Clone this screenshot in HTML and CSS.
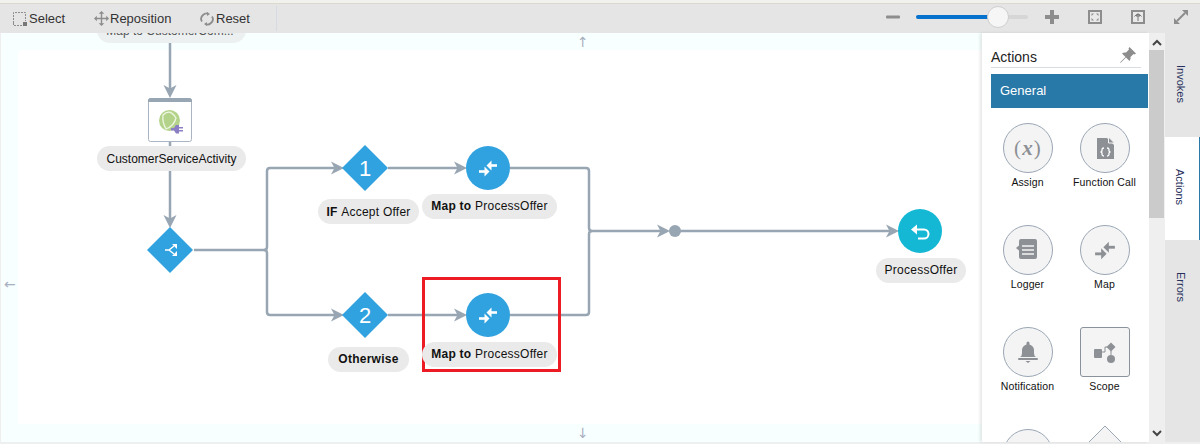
FILE: index.html
```html
<!DOCTYPE html>
<html lang="en">
<head>
    <meta charset="UTF-8">
    <meta name="viewport" content="width=device-width, initial-scale=1.0">
    <title>Process Editor</title>
    <link rel="stylesheet" href="styles.css">
</head>
<body>
    <svg class="defs" width="0" height="0">
        <symbol id="map-icon" viewBox="0 0 20 20">
            <path d="M1 13.500h8" fill="none" stroke="currentColor" stroke-width="2.600"/>
            <path d="M6.500 8.500l5 5-5 5zM13.500 2.500l-5 5 5 5z" fill="currentColor"/>
            <path d="M19 7.500h-8" fill="none" stroke="currentColor" stroke-width="2.600"/>
        </symbol>
    </svg>

    <div class="toolbar">
        <div class="tool">
            <svg width="14" height="14" viewBox="0 0 14 14"><path d="M.5 11V.5h12V9" fill="none" stroke="#8d8d8d" stroke-dasharray="2 1"/><path d="M.5 11v2.500H9" fill="none" stroke="#8d8d8d" stroke-dasharray="2 1"/><rect x="10" y="10" width="4" height="4" fill="#777"/></svg>
            <span>Select</span>
        </div>
        <div class="tool tool-reposition">
            <svg width="15" height="15" viewBox="0 0 16 16"><path d="M8 1v14M1 8h14" stroke="#8d8d8d" stroke-width="1.500"/><path d="M8 0l3 3H5zM8 16l-3-3h6zM0 8l3-3v6zM16 8l-3 3V5z" fill="#8d8d8d"/></svg>
            <span>Reposition</span>
        </div>
        <div class="tool tool-reset">
            <svg width="14" height="14" viewBox="0 0 14 14"><path d="M2 9.500A5 5 0 0 1 3 3q2-2 5-1.500M12 4.500A5 5 0 0 1 11 11q-2 2-5 1.500" fill="none" stroke="#8d8d8d" stroke-width="1.800"/><path d="M7 0v4l3-2zM7 14v-4l-3 2z" fill="#8d8d8d"/></svg>
            <span>Reset</span>
        </div>
        <div class="separator"></div>

        <div class="zoom-tools">
            <svg class="zoom-minus" width="14" height="4" viewBox="0 0 14 4"><rect width="14" height="3" rx="1" y=".5" fill="#8d8d8d"/></svg>
            <div class="slider">
                <div class="slider-fill"></div>
                <div class="slider-thumb"></div>
            </div>
            <svg class="zoom-plus" width="14" height="14" viewBox="0 0 14 14"><path d="M7 0v14M0 7h14" stroke="#8d8d8d" stroke-width="4"/></svg>
            <svg class="zoom-fit" width="14" height="14" viewBox="0 0 14 14"><rect x="1" y="1" width="12" height="12" fill="#e9e9e9" stroke="#8d8d8d" stroke-width="2"/><path d="M3.500 3.500h2.500L3.500 6zM10.500 3.500V6L8 3.500zM3.500 10.500V8L6 10.500zM10.500 10.500H8L10.500 8z" fill="#8d8d8d"/></svg>
            <svg class="zoom-next" width="14" height="14" viewBox="0 0 14 14"><rect x="1" y="1" width="12" height="12" fill="#e9e9e9" stroke="#8d8d8d" stroke-width="2"/><path d="M7 11V5M3.500 6.500A4 4 0 0 1 10.500 6.500M7 3.500 5 6h4z" fill="none" stroke="#777" stroke-width="1"/></svg>
            <svg class="zoom-expand" width="14" height="14" viewBox="0 0 14 14"><path d="M3 11l8-8" stroke="#8d8d8d" stroke-width="2"/><path d="M8 0h6v6zM0 8v6h6z" fill="#8d8d8d"/></svg>
        </div>
    </div>

    <div class="workspace">
        <div class="canvas">
            <div class="canvas-inner"></div>
            <span class="pan pan-up">↑</span>
            <span class="pan pan-left">←</span>
            <span class="pan pan-down">↓</span>

            <svg class="flow" width="982" height="409" viewBox="0 33 982 409">
                <defs>
                    <path id="head" d="M-13-6.500 0 0l-13 6.500 3.500-6.500z" fill="#98a5b3"/>
                </defs>
                <g fill="none" stroke="#98a5b3" stroke-width="2.500">
                    <path d="M170 33v60M170 142v4M170 171v52"/>
                    <path d="M194 250h70q3 0 3-3v-76q0-3 3-3h68"/>
                    <path d="M264 250q3 0 3 3v59q0 3 3 3h68"/>
                    <path d="M388 168h75M388 315h75"/>
                    <path d="M510 168h76q3 0 3 3v57q0 3 3 3h70"/>
                    <path d="M510 315h76q3 0 3-3v-78q0-3 3-3"/>
                    <path d="M675 231h220"/>
                </g>
                <use href="#head" transform="translate(170 98) rotate(90)"/>
                <use href="#head" transform="translate(170 228) rotate(90)"/>
                <use href="#head" transform="translate(344 168)"/>
                <use href="#head" transform="translate(344 315)"/>
                <use href="#head" transform="translate(467 168)"/>
                <use href="#head" transform="translate(467 315)"/>
                <use href="#head" transform="translate(670 231)"/>
                <use href="#head" transform="translate(899 231)"/>

                <rect x="148.500" y="98.500" width="43" height="43" rx="2" fill="#fff" stroke="#a9b5c2"/>
                <path d="M148 101q0-3 3-3h38q3 0 3 3v1h-44z" fill="#98a5b3"/>
                <circle cx="169.500" cy="120.500" r="10.500" fill="#b3d38a"/>
                <path d="M163 115Q170 108 176 118 174 126 166 129 162 122 163 115z" fill="none" stroke="#eef5e2" stroke-width="1.300"/>
                <path d="M171 128h3l2-3h3v2h4v1.500h-4v1.500h4v1.500h-4v2h-3l-2-3h-3z" fill="#8c7ec4"/>

                <path d="M170 227l23 23-23 23-23-23z" fill="#30a2df"/>
                <path d="M165 250h4l5-4M169 250l5 4" fill="none" stroke="#fff" stroke-width="1.500"/>
                <path d="M177 244v5l-5-5zM177 256v-5l-5 5z" fill="#fff"/>
                <path d="M365 145l23 23-23 23-23-23z" fill="#30a2df"/>
                <text class="flow-number" x="365" y="176">1</text>
                <path d="M365 292l23 23-23 23-23-23z" fill="#30a2df"/>
                <text class="flow-number" x="365" y="323">2</text>
                <circle cx="488" cy="168" r="22" fill="#30a2df"/>
                <circle cx="488" cy="315" r="22" fill="#30a2df"/>
                <use class="white-icon" href="#map-icon" x="478" y="158" width="20" height="20"/>
                <use class="white-icon" href="#map-icon" x="478" y="305" width="20" height="20"/>
                <circle cx="675" cy="231" r="6" fill="#98a5b3"/>
                <circle cx="920" cy="231" r="22" fill="#14b8d4"/>
                <path d="M915 229.500h9a4.500 4.500 0 0 1 0 9h-6" fill="none" stroke="#fff" stroke-width="2"/>
                <path d="M911 229.500l6-5v10z" fill="#fff"/>
                <rect x="423.500" y="278.500" width="136" height="92" fill="none" stroke="#ed1c24" stroke-width="3"/>
            </svg>

            <div class="pill pill-top">Map to CustomerCom...</div>
            <div class="pill pill-activity">CustomerServiceActivity</div>
            <div class="pill pill-if"><b>IF</b>&nbsp;Accept Offer</div>
            <div class="pill pill-map-one"><b>Map to</b>&nbsp;ProcessOffer</div>
            <div class="pill pill-otherwise"><b>Otherwise</b></div>
            <div class="pill pill-map-two"><b>Map to</b>&nbsp;ProcessOffer</div>
            <div class="pill pill-return">ProcessOffer</div>
        </div>

        <div class="panel">
            <div class="panel-header">
                <span>Actions</span>
                <svg width="16" height="16" viewBox="0 0 16 16"><path d="M9.500 0 16 6.500l-1.500 1-1-.5-3 3q.5 2.500-1 4L6 10.500 1 15.500l-1 .5.500-1L5.500 10 2 6.500q1.500-1.500 4-1l3-3-.5-1z" fill="#8d8d8d"/></svg>
            </div>
            <div class="panel-section">General</div>
            <div class="cards">
                <div class="card">
                    <div class="card-icon card-text">(<i>x</i>)</div>
                    <span>Assign</span>
                </div>
                <div class="card">
                    <div class="card-icon">
                        <svg width="24" height="24" viewBox="0 0 24 24"><path d="M4 2h10l7 7v14H4z" fill="#8d9095"/><path d="M15.500 1l6 6h-6z" fill="#8d9095" stroke="#f4f4f4"/><path d="M11 12q-2 0-2 1.500v1.500l-1 1 1 1v1.500q0 1.500 2 1.500M14 12q2 0 2 1.500v1.500l1 1-1 1v1.500q0 1.500-2 1.500" fill="none" stroke="#fff" stroke-width="1.300"/></svg>
                    </div>
                    <span>Function Call</span>
                </div>
                <div class="card">
                    <div class="card-icon">
                        <svg width="24" height="24" viewBox="0 0 24 24"><rect x="3" y="1" width="18" height="20" rx="2" fill="#8d9095"/><path d="M6 8h12M6 12h12M6 16h12" stroke="#f4f4f4" stroke-width="1.500"/><path d="M0 10l3-2.500v5z" fill="#8d9095"/></svg>
                    </div>
                    <span>Logger</span>
                </div>
                <div class="card">
                    <div class="card-icon grey-icon">
                        <svg width="22" height="22"><use href="#map-icon"/></svg>
                    </div>
                    <span>Map</span>
                </div>
                <div class="card">
                    <div class="card-icon">
                        <svg width="22" height="22" viewBox="0 0 22 22"><path d="M3 16q2-1 2-4V9q0-4 4.500-5.500V2a1.500 1.500 0 0 1 3 0v1.500Q17 5 17 9v3q0 3 2 4z" fill="#8d9095"/><rect y="17" width="20" height="2" rx="1" x="1" fill="#8d9095"/><path d="M8.500 20h5l-2.500 2z" fill="#8d9095"/></svg>
                    </div>
                    <span>Notification</span>
                </div>
                <div class="card">
                    <div class="card-icon card-square">
                        <svg width="24" height="24" viewBox="0 0 24 24"><rect x="1" y="9" width="8" height="9" rx="1" fill="#8d9095"/><path d="M9 12h3V7h3M18 11v4" fill="none" stroke="#8d9095"/><path d="M18 2.500l4.500 4.500-4.500 4.500L13.500 7z" fill="#8d9095"/><circle cx="18" cy="19" r="4" fill="#8d9095"/></svg>
                    </div>
                    <span>Scope</span>
                </div>
                <div class="card">
                    <div class="card-icon"></div>
                </div>
                <div class="card">
                    <svg class="card-diamond" width="50" height="50" viewBox="0 0 50 50"><path d="M25-3 53 25 25 53-3 25z" fill="#f4f4f4" stroke="#9aa7b5"/></svg>
                </div>
            </div>
        </div>

        <div class="scrollbar">
            <svg class="scroll-arrow" width="10" height="7" viewBox="0 0 10 7"><path d="M1 6l4-4 4 4" fill="none" stroke="#444" stroke-width="2"/></svg>
            <div class="scroll-thumb"></div>
            <svg class="scroll-arrow scroll-down" width="10" height="7" viewBox="0 0 10 7"><path d="M1 1l4 4 4-4" fill="none" stroke="#444" stroke-width="2"/></svg>
        </div>

        <div class="tabs">
            <div class="tab">Invokes</div>
            <div class="tab tab-active">Actions</div>
            <div class="tab">Errors</div>
        </div>
    </div>
    <div class="footer-strip"></div>
</body>
</html>
```

FILE: styles.css
```css
* {
    box-sizing: border-box;
}
html, body {
    height: 100%;
}
body {
    margin: 0;
    overflow: hidden;
    font-family: "Liberation Sans", Arial, sans-serif;
    background-color: #f0f0f0;
    color: #222;
    display: flex;
    flex-direction: column;
}
.defs {
    position: absolute;
}

/* toolbar */
.toolbar {
    height: 33px;
    flex: none;
    display: flex;
    align-items: center;
    padding: 1px 0 0 13px;
    background-color: #e5e5e5;
    border-top: 3px solid #f1f1ee;
    box-shadow: inset 0 1px #dcd9cf;
    font-size: 13px;
    color: #333;
}
.tool {
    display: flex;
    align-items: center;
    gap: 2px;
    width: 81px;
}
.tool-reposition {
    gap: 1px;
    width: 106px;
}
.tool-reset {
    width: 76px;
}
.separator {
    width: 1px;
    height: 25px;
    background-color: #d5dbe2;
}
.zoom-tools {
    margin-left: auto;
    height: 100%;
    display: flex;
    align-items: center;
    padding: 0 12px 3px 0;
}
.slider {
    position: relative;
    width: 112px;
    height: 4px;
    margin: 0 17px 0 16px;
    border-radius: 2px;
    background-color: #d6d6d6;
}
.slider-fill {
    width: 74px;
    height: 100%;
    border-radius: 2px;
    background-color: #0572ce;
}
.slider-thumb {
    position: absolute;
    left: 71px;
    top: -9px;
    width: 22px;
    height: 22px;
    border-radius: 50%;
    background-color: #f6f6f6;
    border: 1px solid #cfcfcf;
}
.zoom-plus, .zoom-fit, .zoom-next {
    margin-right: 29px;
}

/* main area */
.workspace {
    flex: none;
    height: 409px;
    display: flex;
}
.canvas {
    position: relative;
    flex: none;
    width: 982px;
    overflow: hidden;
    background-color: #f8ffff;
    box-shadow: inset 1px 0 #eeeeee;
}
.canvas-inner {
    position: absolute;
    left: 18px;
    top: 17px;
    right: 0;
    bottom: 18px;
    background-color: #fff;
}
.flow {
    position: absolute;
    left: 0;
    top: 0;
}
.flow-number {
    font-size: 22px;
    fill: #fff;
    text-anchor: middle;
}
.white-icon {
    color: #fff;
}
.pan {
    position: absolute;
    font-family: "DejaVu Sans", sans-serif;
    font-size: 14px;
    line-height: 14px;
    color: #a8b0c0;
}
.pan-up {
    left: 577px;
    top: 2px;
}
.pan-left {
    left: 4px;
    top: 244px;
}
.pan-down {
    left: 577px;
    top: 393px;
}

/* flow labels */
.pill {
    position: absolute;
    height: 25px;
    border-radius: 13px;
    background-color: #eaeaea;
    color: #111;
    font-size: 12px;
    letter-spacing: .25px;
    display: flex;
    align-items: center;
    justify-content: center;
    white-space: nowrap;
}
.pill-top {
    left: 97px;
    top: -15px;
    width: 149px;
    padding-right: 3px;
    background-color: #ecf0f1;
    color: #555;
    letter-spacing: 0;
}
.pill-activity {
    left: 97px;
    top: 113px;
    width: 149px;
    letter-spacing: 0;
}
.pill-if {
    left: 318px;
    top: 166px;
    width: 101px;
}
.pill-map-one {
    left: 422px;
    top: 161px;
    width: 135px;
    padding-bottom: 1px;
}
.pill-otherwise {
    left: 328px;
    top: 314px;
    width: 81px;
    padding-bottom: 1px;
}
.pill-map-two {
    left: 422px;
    top: 309px;
    width: 135px;
    padding-bottom: 1px;
}
.pill-return {
    left: 876px;
    top: 225px;
    width: 90px;
    padding-bottom: 1px;
}

/* actions panel */
.panel {
    flex: none;
    width: 167px;
    overflow: hidden;
    background-color: #fff;
    box-shadow: -2px 0 3px rgba(0, 0, 0, .1);
    position: relative;
}
.panel-header {
    display: flex;
    justify-content: space-between;
    align-items: center;
    width: 150px;
    height: 35px;
    margin-left: 9px;
    padding: 14px 5px 0 0;
    border-bottom: 1px solid #d9dde2;
    font-size: 14px;
}
.panel-header svg {
    margin-bottom: 4px;
}
.panel-section {
    height: 34px;
    margin: 6px 0 0 9px;
    width: 157px;
    padding-left: 9px;
    line-height: 33px;
    font-size: 13px;
    color: #fff;
    background-color: #2878a8;
}
.cards {
    display: grid;
    grid-template-columns: 77px 77px;
    grid-auto-rows: 102px;
    padding: 15px 0 0 7px;
}
.card {
    position: relative;
    display: flex;
    flex-direction: column;
    align-items: center;
    font-size: 10.500px;
    letter-spacing: .12px;
    color: #111;
}
.card span {
    margin-top: 3px;
}
.card-icon {
    width: 50px;
    height: 50px;
    flex: none;
    display: flex;
    align-items: center;
    justify-content: center;
    border: 1px solid #9aa7b5;
    border-radius: 50%;
    background-color: #f4f4f4;
}
.card-square {
    border-radius: 3px;
    border-color: #8a929c;
}
.card-text {
    font-family: "Liberation Serif", serif;
    font-size: 21px;
    color: #8d9095;
}
.card-text i {
    font-weight: bold;
    padding: 0 1px;
}
.grey-icon {
    color: #8d9095;
}
.card-diamond {
    overflow: visible;
}

/* scrollbar and side tabs */
.scrollbar {
    flex: none;
    width: 15px;
    position: relative;
    background-color: #efefef;
    text-align: center;
}
.scroll-arrow {
    position: absolute;
    left: 3px;
    top: 6px;
}
.scroll-down {
    top: 397px;
}
.scroll-thumb {
    position: absolute;
    left: 0;
    top: 17px;
    width: 100%;
    height: 168px;
    background-color: #cbcbcb;
}
.tabs {
    flex: none;
    width: 35px;
    margin-left: 1px;
    background-color: #e5e5e5;
    font-size: 11px;
    color: #27315c;
}
.tab {
    width: 100%;
    height: 103.500px;
    padding: 32px 13px 0 0;
    writing-mode: vertical-rl;
}
.tab-active {
    background-color: #fff;
    border-right: 1px solid #2878a8;
}
.footer-strip {
    flex: 1;
    background-color: #eef0f0;
}
```
